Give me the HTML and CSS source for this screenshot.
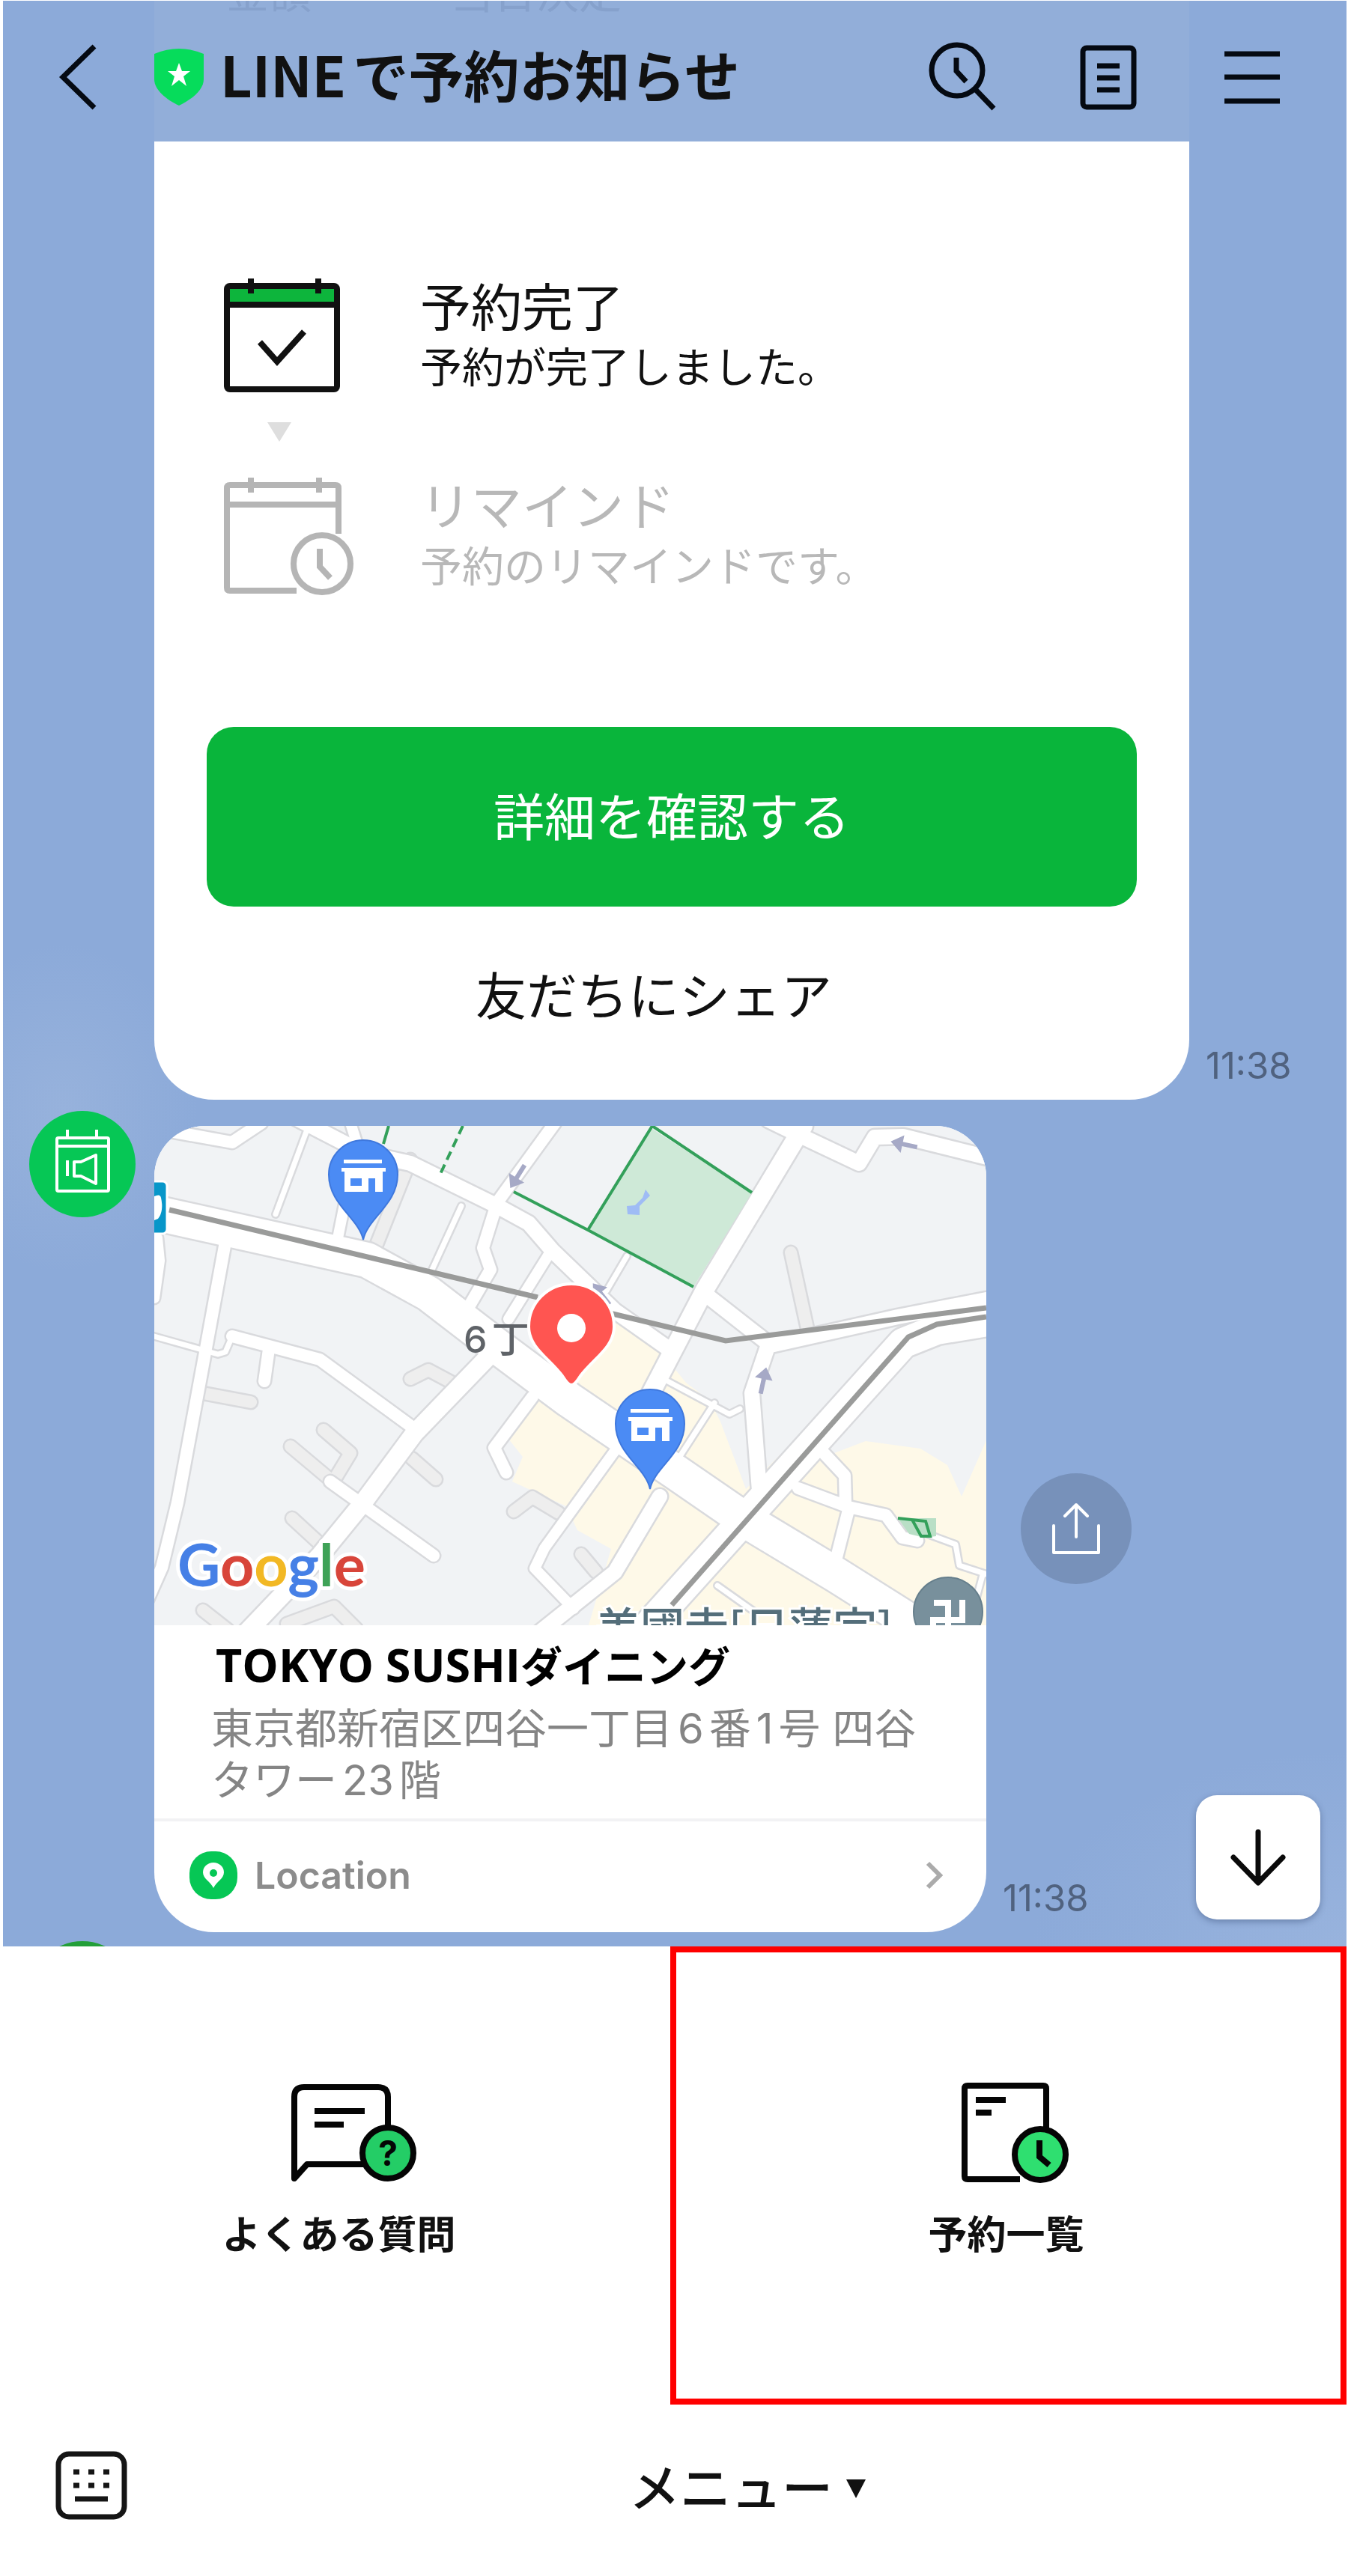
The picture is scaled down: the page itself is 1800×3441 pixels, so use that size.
FILE: index.html
```html
<!DOCTYPE html>
<html lang="ja">
<head>
<meta charset="utf-8">
<title>LINEで予約お知らせ</title>
<meta name="viewport" content="width=device-width, initial-scale=1">
<link rel="stylesheet" href="styles.css">
</head>
<body>
<main class="chat">
  <header class="chat-header">
    <div class="scrolled-row"><span>金額</span><span>当日決定</span></div>
    <button class="icon-btn back" type="button" aria-label="戻る">
      <svg width="56" height="90" viewBox="0 0 56 90" fill="none" stroke="#050a12" stroke-width="7"><path d="M50 4 8 45l42 41"/></svg>
    </button>
    <svg class="shield" width="66" height="76" viewBox="0 0 66 76"><path d="M0 7Q33-7 66 7v34c0 14-16 27-33 35C16 68 0 55 0 41z" fill="#06dc5b"/><path d="m33 19 4 11h11l-9 7 4 13-10-8-10 8 4-13-9-7h11z" fill="#fff"/></svg>
    <h1 class="chat-title">LINEで予約お知らせ</h1>
    <nav class="header-tools">
      <button class="icon-btn" type="button" aria-label="検索">
        <svg width="90" height="94" viewBox="0 0 90 94" fill="none" stroke="#050a12" stroke-width="7"><circle cx="38" cy="38" r="34"/><path d="M37 21v18l13 14M62 63l25 26"/></svg>
      </button>
      <button class="icon-btn" type="button" aria-label="ノート">
        <svg width="76" height="94" viewBox="0 0 76 94" fill="none" stroke="#050a12" stroke-width="7"><rect x="4" y="8" width="68" height="79" rx="5"/><path d="M23 32h30M23 48h30M23 64h30"/></svg>
      </button>
      <button class="icon-btn" type="button" aria-label="メニューを開く">
        <svg width="74" height="94" viewBox="0 0 74 94" fill="none" stroke="#050a12" stroke-width="7"><path d="M0 16h74M0 47h74M0 79h74"/></svg>
      </button>
    </nav>
  </header>

  <section class="message">
    <div class="avatar-col"></div>
    <article class="card booking">
      <ol class="steps">
        <li class="step">
          <svg width="176" height="160" viewBox="0 0 176 160" fill="none" stroke="#111" stroke-width="8">
            <path d="M4 12h147v22H4z" fill="#0db53c" stroke="none"/>
            <rect x="4" y="11" width="147" height="138" rx="4"/><path d="M4 36h147M36 1v20M126 1v20"/><path d="m48 86 23 26 36-40"/>
          </svg>
          <div class="step-text"><h2>予約完了</h2><p>予約が完了しました。</p></div>
        </li>
        <li class="step-arrow"><svg width="32" height="26" viewBox="0 0 32 26"><path d="M0 0h32L16 26z" fill="#dedede"/></svg></li>
        <li class="step pending">
          <svg width="176" height="160" viewBox="0 0 176 160" fill="none" stroke="#b5b5b5" stroke-width="8">
            <path d="M153 76V15q0-4-4-4H8q-4 0-4 4v133q0 4 4 4h89M4 37h149M36 1v20M127 1v20"/>
            <circle cx="131" cy="116" r="38"/><path d="M128 96v24l14 15"/>
          </svg>
          <div class="step-text"><h2>リマインド</h2><p>予約のリマインドです。</p></div>
        </li>
      </ol>
      <button class="primary" type="button">詳細を確認する</button>
      <button class="share-text" type="button">友だちにシェア</button>
    </article>
    <div class="meta"><time>11:38</time></div>
  </section>

  <section class="message place-message">
    <div class="avatar-col">
      <svg class="avatar" width="142" height="142" viewBox="0 0 142 142"><circle cx="71" cy="71" r="71" fill="#06c755"/><g fill="none" stroke="#fff" stroke-width="4"><rect x="37" y="36" width="69" height="71" rx="2"/><path d="M37 47h69M51 25v10M90 25v10M51 66v21"/><path d="M60 68h9l20-9v38l-20-10h-9z" stroke-linejoin="round"/></g></svg>
    </div>
    <article class="card place">
      <svg class="map" viewBox="0 0 1111 667" role="img" aria-label="地図">
        <defs>
          <g id="store">
            <path d="M0 87C-6 58-46 40-46 0a46 46 0 0 1 92 0C46 40 6 58 0 87z" fill="#4b8bf4" stroke="#3f78dd" stroke-width="2"/>
            <path d="M-26-20h51v5h-51zM-29-9h59v5h-4v27h-51v-27h-4zM-17 5v10h15V5zM7 5v18h9V5z" fill="#fff" fill-rule="evenodd"/>
          </g>
          <path id="arrow" d="M-3-16h6V4h9L0 20-12 4h9z" fill="#a6a9c6"/>
          <g id="lanes">
            <path class="w-lane" d="M182 428 238 475M226 406 262 437 242 470M344 444 376 472M184 524 221 558M65 357 129 369M342 338 366 326 396 342M65 647 98 673M480 515 505 496 540 517M177 665 240 642 270 672M850 169 873 275M342 45 293 168M570 572 590 596"/>
          </g>
          <g id="roads">
            <path class="w-main" d="M-20 111 0 116 284 179 366 224 444 284 554 366 697 463 790 527 911 600 1030 675"/>
            <path class="w-rail" d="M640 690 1000 290 1045 272 1130 258"/>
            <path class="w-wide" d="M454 300 347 411 279 503 221 574 120 680M867 0 735 219 660 363"/>
            <path class="w-mid" d="M190-10 279 36 342 50 458 107 500 130 532 167 615 247 690 300M820-8 867 15 941 50 962 15 1000 14 1120 44M735 224 823 293 993 255 1111 232M818 298 798 357 809 500M675 495 615 596 510 680"/>
            <path class="w-lane" d="M95 155 65 319 31 503 10 590-10 635M104 281 221 312 344 402M153 298 147 341M235 475 373 574M505 362 454 430 470 463M15 6 104 22 143-4M535-4 458 102 439 163 449 192 415 250M893 436 922 467 923 504M860 484 927 509 977 520 999 550 1019 554M927 513 905 600"/>
            <path class="w-narrow" d="M526 173 473 258M255 100 245 150M262-4 272 28M618 430 521 564 508 591 560 645M4 150 7 180 0 230"/>
            <path class="w-path" d="M-4 280 85 305 95 302 104 281M204 5 162 118M410 107 371 192M748 370 697 449M680 338 768 385 782 378M1032 545 1070 559 1075 587 1115 600M1106 600 1098 630M752 614 800 648M631 174 604 220"/>
          </g>
        </defs>
        <path d="M0 0h1111v667H0z" fill="#f1f3f5"/>
        <path d="M507 371 473 418l19 24-14 33 72 33 15 32 45 25-30 102h531V420l-33 75-19-42-36-22-73-10-50 19-30-40-10 15-70 70-34-90-14-28-32-24-56-69-52-26-60 30z" fill="#fef9e8"/>
        <path d="M800 430 818 310 985 265 880 400z" fill="#f1f3f5"/>
        <g class="lane-case"><use href="#lanes"/></g><g class="lane-fill"><use href="#lanes"/></g>
        <g class="road-case"><use href="#roads"/></g><g class="road-fill"><use href="#roads"/></g>
        <path d="M665 4 798 89 720 215 579 139z" fill="#cee9d7"/>
        <path d="M656 85l6 8-14 14v12l-16-1-1-11 11-1 10-10z" fill="#9fbcf5"/>
        <path d="M993 524 1044 524 1044 548 1028 550 1008 545z" fill="#b9dfc6"/>
        <g fill="none" stroke="#33a05a" stroke-width="4"><path d="M480 88 579 139 720 215M579 139 665 0 798 89M313 0 306 24M993 524 1030 528 1036 548 1024 548 1012 526"/><path d="M412 0 382 64" stroke-dasharray="12 7"/></g>
        <g fill="none" stroke="#9a9b9a" stroke-width="7"><path d="M20 112 512 229M608 250 763 287 1111 243M691 640 1007 282 1045 265 1111 255"/></g>
        <use href="#arrow" transform="translate(486 66) rotate(32)"/>
        <use href="#arrow" transform="translate(1003 25) rotate(102)"/>
        <use href="#arrow" transform="translate(813 342) rotate(192)"/>
        <use href="#arrow" transform="translate(598 226) rotate(142)"/>
        <rect x="-40" y="74" width="57" height="70" rx="6" fill="#0796c9" stroke="#fff" stroke-width="3"/>
        <path d="M0 94q8-4 9 2 4 18-4 28l-5 2z" fill="#fff"/>
        <use href="#store" x="279" y="65"/><use href="#store" x="662" y="398"/>
        <text class="block-name" x="413" y="303">6丁</text>
        <path d="M557 346c-5 0-8-6-12-12-18-24-45-38-45-66a57 57 0 0 1 114 0c0 28-27 42-45 66-4 6-7 12-12 12z" fill="#ff5551" stroke="#fff" stroke-width="4"/>
        <circle cx="557" cy="270" r="19" fill="#fff"/>
        <text class="google" x="31" y="615"><tspan fill="#4680e6">G</tspan><tspan fill="#d8453a">o</tspan><tspan fill="#f2b824">o</tspan><tspan fill="#4680e6">g</tspan><tspan fill="#3fa257">l</tspan><tspan fill="#d8453a">e</tspan></text>
        <text class="temple" x="590" y="693">美國寺[日蓮宗]</text>
        <circle cx="1060" cy="649" r="46" fill="#78909c" stroke="#667f8c" stroke-width="2"/>
        <path d="M1041 637h19v45h21M1079 633v27h-39v24" fill="none" stroke="#fff" stroke-width="8"/>
      </svg>
      <div class="place-text">
        <h2><span class="latin">TOKYO SUSHI</span>ダイニング</h2>
        <p>東京都新宿区四谷一丁目6番1号 四谷<br>タワー23階</p>
      </div>
      <a class="location" href="#location">
        <svg width="66" height="66" viewBox="0 0 66 66"><rect x="1" y="1" width="64" height="64" rx="29" fill="#06c755"/><path d="M33 50C29 41 19 38 19 29a14 13 0 0 1 28 0c0 9-10 12-14 21z" fill="#fff"/><circle cx="33" cy="30" r="5" fill="#06c755"/></svg>
        <span>Location</span>
        <svg class="go" width="26" height="40" viewBox="0 0 26 40" fill="none" stroke="#ababab" stroke-width="6"><path d="m4 4 16 16L4 36"/></svg>
      </a>
    </article>
    <div class="meta wide">
      <button class="share-round" type="button" aria-label="シェア">
        <svg width="66" height="72" viewBox="0 0 66 72" fill="none" stroke="#fff" stroke-width="4" stroke-linecap="round" stroke-linejoin="round"><path d="M3 32v36h60V32M33 47V4M18 19 33 4l15 15"/></svg>
      </button>
      <time>11:38</time>
    </div>
  </section>

  <div class="next-avatar"></div>
  <button class="scroll-down" type="button" aria-label="最新のメッセージへ">
    <svg width="76" height="76" viewBox="0 0 76 76" fill="none" stroke="#0a0a0a" stroke-width="7" stroke-linecap="round" stroke-linejoin="round"><path d="M38 4v66M5 38l33 34 33-34"/></svg>
  </button>
</main>

<nav class="rich-menu">
  <a class="tile" href="#faq">
    <svg width="208" height="136" viewBox="0 0 208 136" fill="none" stroke="#050505" stroke-width="8">
      <path d="M169 60V21q0-13-13-13H57q-13 0-13 13v109l17-19h85" stroke-linejoin="round"/><path d="M71 40h67M71 58h39"/>
      <circle cx="169" cy="96" r="34" fill="#24cd66"/>
      <text class="mark" x="169" y="113">?</text>
    </svg>
    <span>よくある質問</span>
  </a>
  <a class="tile selected" href="#bookings">
    <svg width="168" height="136" viewBox="0 0 168 136" fill="none" stroke="#050505" stroke-width="8">
      <path d="M137 66V10q0-4-4-4H32q-4 0-4 4v117q0 4 4 4h70"/><path d="M43 25h40M43 42h21"/>
      <circle cx="129" cy="98" r="34" fill="#2fdf70"/><path d="M128 79v22l13 11"/>
    </svg>
    <span>予約一覧</span>
  </a>
</nav>

<footer class="menu-bar">
  <button class="icon-btn" type="button" aria-label="キーボード">
    <svg width="96" height="94" viewBox="0 0 96 94" fill="none" stroke="#151515" stroke-width="7"><rect x="4" y="5" width="88" height="84" rx="14"/><path d="M24 29h8M44 29h8M64 29h8M24 47h8M44 47h8M64 47h8M26 65h44"/></svg>
  </button>
  <button class="menu-toggle" type="button">メニュー<svg width="26" height="26" viewBox="0 0 26 26"><path d="M0 0h26L13 25z" fill="#111"/></svg></button>
</footer>
</body>
</html>
```
FILE: styles.css
```css
* { box-sizing: border-box; }

body {
  margin: 0;
  background: #fff;
  color: #111;
  font-family: Inter, "Noto Sans CJK JP", sans-serif;
  text-autospace: normal;
}

h1, h2, p, ol { margin: 0; padding: 0; }
ol { list-style: none; }
svg { display: block; flex: none; }
a { color: inherit; text-decoration: none; }

button {
  border: 0;
  padding: 0;
  background: none;
  color: inherit;
  font: inherit;
}

.chat {
  position: relative;
  overflow: hidden;
  margin: 1px 2px 0 4px;
  padding-bottom: 19px;
  background:
    radial-gradient(ellipse 180px 220px at 80px 1480px, #97b2dc, transparent),
    radial-gradient(ellipse 420px 260px at 100% 100%, #98b3dd, transparent),
    #8caad9;
}

.chat-header {
  position: relative;
  display: flex;
  align-items: center;
  height: 188px;
  padding: 16px 89px 0 72px;
  background: linear-gradient(#92aed9, #92aed9) 202px 0 / calc(100% - 412px) 100% no-repeat;
}

/* The message row that shows faintly through the header */
.scrolled-row {
  position: absolute;
  top: -42px;
  left: 298px;
  display: flex;
  gap: 186px;
  color: #86a1cc;
  font-size: 57px;
  line-height: 64px;
}

.shield { margin-left: 74px; }

.chat-title {
  position: relative;
  margin-left: 22px;
  padding-bottom: 10px;
  font-family: "Noto Sans CJK JP", sans-serif;
  font-size: 74px;
  font-weight: 700;
  line-height: 96px;
  white-space: nowrap;
}

.header-tools {
  display: flex;
  align-items: center;
  margin-left: auto;
}
.header-tools .icon-btn + .icon-btn { margin-left: 112px; }
.header-tools .icon-btn + .icon-btn + .icon-btn { margin-left: 117px; }

.message { display: flex; }
.place-message { margin-top: 35px; }
.avatar-col { flex: none; width: 202px; }
.avatar { margin: -20px 0 0 35px; }

.card {
  flex: 1;
  min-width: 0;
  overflow: hidden;
  background: #fff;
}

.meta {
  flex: none;
  display: flex;
  align-items: flex-end;
  width: 210px;
  padding-left: 22px;
}
.meta.wide { position: relative; width: 481px; }

time {
  padding-bottom: 17px;
  color: #50627f;
  font-size: 49px;
  line-height: 56px;
}

.booking {
  display: flex;
  flex-direction: column;
  padding: 182px 70px 20px;
  border-radius: 0 0 80px 80px;
}

.steps { padding-left: 23px; }
.step { display: flex; gap: 86px; }
.step-text { margin: -4px 0 4px; }
.step h2 { font-size: 68px; font-weight: 400; line-height: 80px; }
.step p { font-size: 56px; line-height: 80px; }
.pending { color: #b8b8b8; }
.step h2, .step p, .primary, .share-text { font-family: "Noto Sans CJK JP", sans-serif; }
.step-arrow { padding: 33px 58px 47px; }

.primary {
  height: 240px;
  margin-top: 174px;
  padding-bottom: 8px;
  border-radius: 36px;
  background: #09b53b;
  color: #fff;
  font-size: 68px;
}

.share-text {
  height: 238px;
  padding: 0 48px 8px 0;
  font-size: 68px;
}

.place { border-radius: 68px 68px 80px 80px; }
.map { width: 100%; height: auto; }

/* Roads are drawn twice: a grey pass widened by --case, then the surface */
.lane-case, .lane-fill, .road-case, .road-fill {
  --case: 0px;
  fill: none;
  stroke-linecap: round;
  stroke-linejoin: round;
}
.lane-case, .road-case { --case: 5px; stroke: #d9dadd; }
.lane-fill { stroke: #eeeeee; }
.road-fill { stroke: #fff; }
.w-main { stroke-width: calc(46px + var(--case)); }
.w-rail { stroke-width: calc(40px + var(--case)); }
.w-wide { stroke-width: calc(24px + var(--case)); }
.w-mid { stroke-width: calc(20px + var(--case)); }
.w-lane { stroke-width: calc(16px + var(--case)); }
.w-narrow { stroke-width: calc(14px + var(--case)); }
.w-path { stroke-width: calc(7px + var(--case)); }

.block-name { font: 500 50px Inter, "Noto Sans CJK JP", sans-serif; fill: #5f6368; }
.google {
  font: 700 79px Lato, sans-serif;
  stroke: #fff;
  stroke-width: 10px;
  stroke-linejoin: round;
  paint-order: stroke;
}
.temple {
  font: 500 59px "Noto Sans CJK JP", sans-serif;
  fill: #546e7a;
  stroke: #fff;
  stroke-width: 6px;
  paint-order: stroke;
}

.place-text { padding: 10px 76px 16px; }
.place-text h2 {
  padding-left: 6px;
  color: #000;
  font-family: "Noto Sans CJK JP", sans-serif;
  font-size: 56px;
  font-weight: 700;
  line-height: 84px;
  text-autospace: no-autospace;
}
.place-text .latin { font-family: "Open Sans", sans-serif; font-size: 61px; line-height: 64px; }
.place-text p {
  margin-top: 10px;
  color: #858585;
  font-size: 56px;
  line-height: 69px;
}

.location {
  display: flex;
  align-items: center;
  height: 152px;
  padding: 0 56px 4px 46px;
  border-top: 4px solid #f2f2f4;
  color: #8c8c8c;
  font-size: 50px;
  font-weight: 600;
}
.location span { margin-left: 22px; }
.go { margin-left: auto; }

.share-round {
  position: absolute;
  top: 464px;
  left: 46px;
  display: grid;
  place-items: center;
  width: 148px;
  height: 148px;
  border-radius: 50%;
  background: #7791ba;
}

/* Top edge of the following message's avatar */
.next-avatar {
  position: absolute;
  left: 35px;
  bottom: -135px;
  width: 142px;
  height: 142px;
  border-radius: 50%;
  background: #239f39;
}

.scroll-down {
  position: absolute;
  right: 35px;
  bottom: 36px;
  display: grid;
  place-items: center;
  width: 166px;
  height: 166px;
  border-radius: 28px;
  background: #fff;
  box-shadow: 0 3px 8px rgba(40, 60, 100, .4);
}

.rich-menu {
  display: grid;
  grid-template-columns: 1fr 1fr;
  margin: 0 2px 0 4px;
}
.tile {
  display: flex;
  flex-direction: column;
  align-items: center;
  gap: 30px;
  height: 612px;
  padding-top: 180px;
  font-family: "Noto Sans CJK JP", sans-serif;
  font-size: 52px;
  font-weight: 700;
  line-height: 72px;
}
.tile.selected {
  margin-left: -6px;
  padding: 172px 6px 0 0;
  border: 8px solid #f00;
}
.mark { font: 700 46px Inter, sans-serif; fill: #050505; stroke: none; text-anchor: middle; }

.menu-bar {
  display: grid;
  grid-template-columns: 1fr auto 1fr;
  align-items: center;
  padding: 58px 74px 71px;
}
.menu-toggle {
  display: flex;
  align-items: center;
  gap: 18px;
  margin-left: 196px;
  font-family: "Noto Sans CJK JP", sans-serif;
  font-size: 68px;
  font-weight: 500;
  line-height: 100px;
}
.menu-toggle svg { margin-top: 10px; }
```
